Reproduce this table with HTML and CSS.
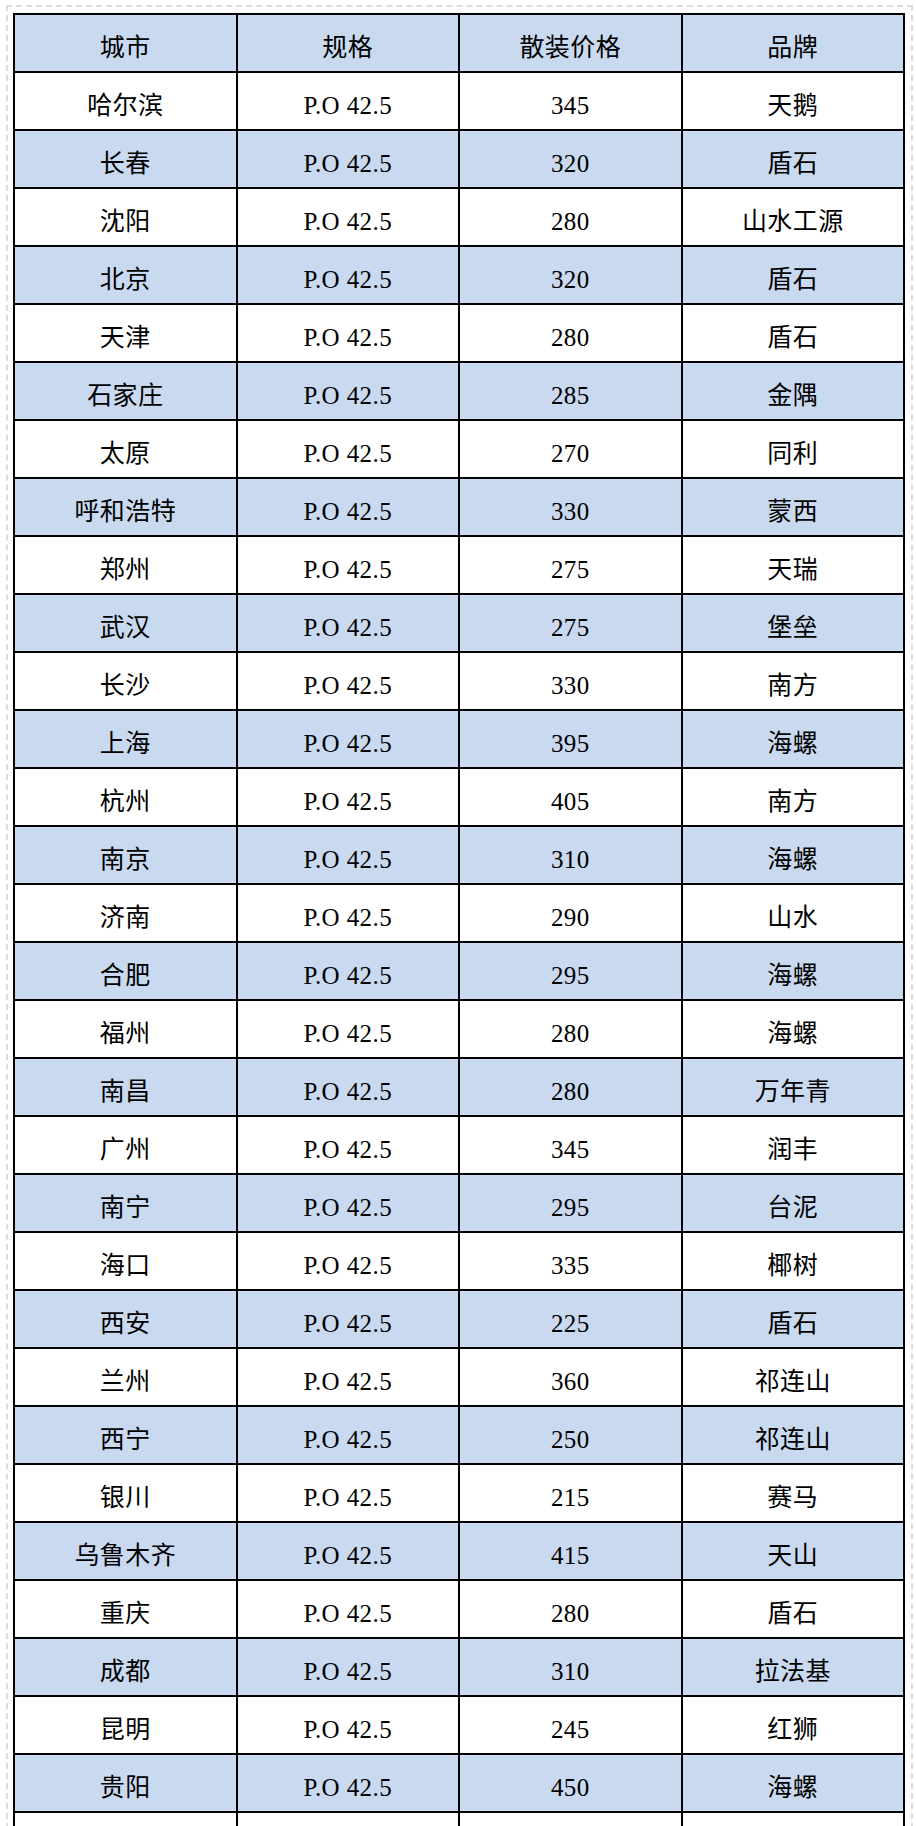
FILE: index.html
```html
<!DOCTYPE html>
<html lang="zh-CN">
<head>
<meta charset="utf-8">
<title>水泥价格</title>
<link rel="stylesheet" href="styles.css">
</head>
<body>
<div class="frame">
<table class="price">
<colgroup><col class="c"><col class="c"><col class="c"><col class="c"></colgroup>
<thead>
<tr><th>城市</th><th>规格</th><th>散装价格</th><th>品牌</th></tr>
</thead>
<tbody>
<tr><td>哈尔滨</td><td>P.O 42.5</td><td>345</td><td>天鹅</td></tr>
<tr><td>长春</td><td>P.O 42.5</td><td>320</td><td>盾石</td></tr>
<tr><td>沈阳</td><td>P.O 42.5</td><td>280</td><td>山水工源</td></tr>
<tr><td>北京</td><td>P.O 42.5</td><td>320</td><td>盾石</td></tr>
<tr><td>天津</td><td>P.O 42.5</td><td>280</td><td>盾石</td></tr>
<tr><td>石家庄</td><td>P.O 42.5</td><td>285</td><td>金隅</td></tr>
<tr><td>太原</td><td>P.O 42.5</td><td>270</td><td>同利</td></tr>
<tr><td>呼和浩特</td><td>P.O 42.5</td><td>330</td><td>蒙西</td></tr>
<tr><td>郑州</td><td>P.O 42.5</td><td>275</td><td>天瑞</td></tr>
<tr><td>武汉</td><td>P.O 42.5</td><td>275</td><td>堡垒</td></tr>
<tr><td>长沙</td><td>P.O 42.5</td><td>330</td><td>南方</td></tr>
<tr><td>上海</td><td>P.O 42.5</td><td>395</td><td>海螺</td></tr>
<tr><td>杭州</td><td>P.O 42.5</td><td>405</td><td>南方</td></tr>
<tr><td>南京</td><td>P.O 42.5</td><td>310</td><td>海螺</td></tr>
<tr><td>济南</td><td>P.O 42.5</td><td>290</td><td>山水</td></tr>
<tr><td>合肥</td><td>P.O 42.5</td><td>295</td><td>海螺</td></tr>
<tr><td>福州</td><td>P.O 42.5</td><td>280</td><td>海螺</td></tr>
<tr><td>南昌</td><td>P.O 42.5</td><td>280</td><td>万年青</td></tr>
<tr><td>广州</td><td>P.O 42.5</td><td>345</td><td>润丰</td></tr>
<tr><td>南宁</td><td>P.O 42.5</td><td>295</td><td>台泥</td></tr>
<tr><td>海口</td><td>P.O 42.5</td><td>335</td><td>椰树</td></tr>
<tr><td>西安</td><td>P.O 42.5</td><td>225</td><td>盾石</td></tr>
<tr><td>兰州</td><td>P.O 42.5</td><td>360</td><td>祁连山</td></tr>
<tr><td>西宁</td><td>P.O 42.5</td><td>250</td><td>祁连山</td></tr>
<tr><td>银川</td><td>P.O 42.5</td><td>215</td><td>赛马</td></tr>
<tr><td>乌鲁木齐</td><td>P.O 42.5</td><td>415</td><td>天山</td></tr>
<tr><td>重庆</td><td>P.O 42.5</td><td>280</td><td>盾石</td></tr>
<tr><td>成都</td><td>P.O 42.5</td><td>310</td><td>拉法基</td></tr>
<tr><td>昆明</td><td>P.O 42.5</td><td>245</td><td>红狮</td></tr>
<tr><td>贵阳</td><td>P.O 42.5</td><td>450</td><td>海螺</td></tr>
<tr class="more"><td></td><td></td><td></td><td></td></tr>
</tbody>
</table>
</div>
</body>
</html>
```
FILE: styles.css
```css
html, body {
  margin: 0;
  padding: 0;
  background: #ffffff;
}

body {
  font-family: "Liberation Serif", "Noto Sans CJK SC", serif;
  color: #000000;
}

.frame {
  margin: 5px 3px 0 6px;
  padding: 6px 5px 6px 5px;
  border: 2px dashed #dcdcdc;
}

.price {
  width: 892px;
  border-collapse: collapse;
  table-layout: fixed;
  font-size: 25px;
  letter-spacing: 0.4px;
}

.price .c {
  width: 25%;
}

.price th,
.price td {
  height: 48px;
  padding: 8px 0 0 0;
  border: 2px solid #000000;
  text-align: center;
  vertical-align: middle;
  font-weight: normal;
  line-height: 1;
}

.price thead tr,
.price tbody tr:nth-child(even) {
  background: #c9d9ef;
}

.price tbody tr:nth-child(odd) {
  background: #ffffff;
}
```
